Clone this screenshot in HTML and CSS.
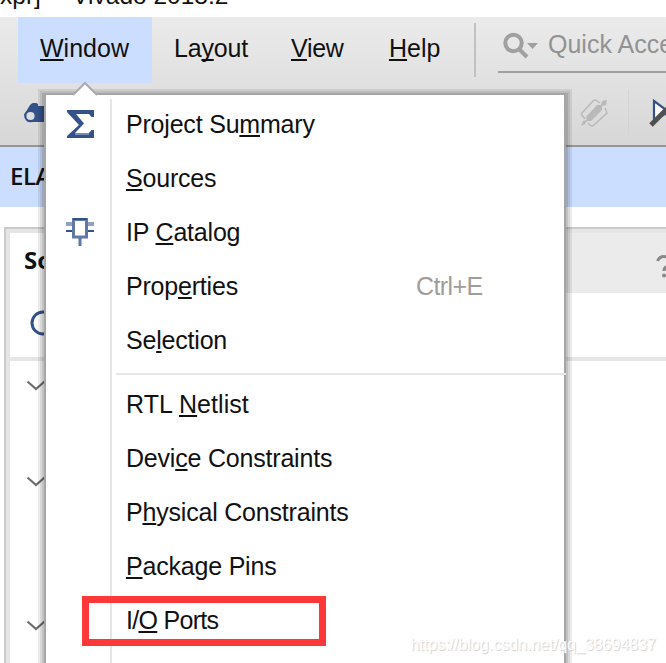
FILE: index.html
```html
<!DOCTYPE html>
<html lang="en">
<head>
<meta charset="utf-8">
<title>Vivado 2018.2</title>
<link rel="stylesheet" href="styles.css">
</head>
<body>
<div class="app">
  <div class="titlebar"><span class="file">xpr]</span><span>-</span><span class="name">Vivado 2018.2</span></div>
  <header class="chrome">
    <nav class="menubar">
      <div class="menu active"><span><u>W</u>indow</span></div>
      <div class="menu layout"><span>La<u>y</u>out</span></div>
      <div class="menu view"><span><u>V</u>iew</span></div>
      <div class="menu help"><span><u>H</u>elp</span></div>
      <div class="divider"></div>
      <div class="search">
        <svg width="36" height="28" viewBox="0 0 36 28"><circle cx="10.500" cy="11" r="8.200" fill="none" stroke="#a0a0a0" stroke-width="4"/><path d="M16 17l8 8" stroke="#a0a0a0" stroke-width="4"/><path d="M24 11h11l-5.500 6z" fill="#a0a0a0"/></svg>
        <span>Quick Acce</span>
      </div>
    </nav>
    <div class="toolbar">
      <svg class="binoculars" width="38" height="24" viewBox="0 0 38 24"><path d="M0 12L6 2Q10-2 14 1V3h7V1q6-3 9 1l7 10-6 7H18L9 19z" fill="#34528a"/><circle cx="6.500" cy="13" r="5.200" fill="#dcdcdc" stroke="#34528a" stroke-width="2.200"/><circle cx="29" cy="13" r="5.200" fill="#dcdcdc" stroke="#34528a" stroke-width="2.200"/></svg>
      <svg class="eraser" width="30" height="30" viewBox="0 0 30 30"><path d="M2 16L14 3q2-2 4 0l3 2M6 21l-4-5M26 10l2 5-13 12q-2 2-4 0l-2-2" fill="none" stroke="#b9b9b9" stroke-width="1.500"/><path d="M2 28l2-5 4-1L7 19 18 7l4 0 1-4 5-1-1 5-4 1v4L12 23H8l-2 3z" fill="#b9b9b9"/></svg>
      <div class="tooldivider"></div>
      <svg class="pointer" width="17" height="30" viewBox="0 0 17 30"><path d="M5 3v19L20 14z" fill="#fff" stroke="#34528a" stroke-width="2.200"/><path d="M2 27L18 11" stroke="#505050" stroke-width="5"/></svg>
    </div>
  </header>
  <div class="flowbar">ELA</div>
  <main class="panel">
    <div class="tabs"><div class="tab">So</div><div class="tabfill"><svg width="16" height="26" viewBox="0 0 16 26"><path d="M1.500 7q2-4.500 6.500-4.500t6 4.500q0 4-4 6-2 1-2 4" fill="none" stroke="#888" stroke-width="3"/><circle cx="8" cy="21.500" r="2" fill="#888"/></svg></div></div>
    <div class="paneltools"><svg width="26" height="26" viewBox="0 0 26 26"><circle cx="13" cy="13" r="11" fill="none" stroke="#34528a" stroke-width="3"/></svg></div>
    <div class="tree">
      <svg class="chev" width="20" height="12" viewBox="0 0 20 12"><path d="M1.500 1.500L10 9l8.500-7.500" fill="none" stroke="#6e6e6e" stroke-width="2.200"/></svg>
      <svg class="chev second" width="20" height="12" viewBox="0 0 20 12"><path d="M1.500 1.500L10 9l8.500-7.500" fill="none" stroke="#6e6e6e" stroke-width="2.200"/></svg>
      <svg class="chev third" width="20" height="12" viewBox="0 0 20 12"><path d="M1.500 1.500L10 9l8.500-7.500" fill="none" stroke="#6e6e6e" stroke-width="2.200"/></svg>
    </div>
  </main>

  <div class="popup">
    <svg class="arrow" width="26" height="16" viewBox="0 0 26 16"><path d="M1 14L13 2l12 12v2H1z" fill="#fff"/><path d="M1 14L13 2l12 12" fill="none" stroke="#aaa" stroke-width="2"/></svg>
    <div class="rail"></div>
    <div class="item"><svg class="icon" width="28" height="28" viewBox="0 0 28 28"><path d="M1 0H28V7H25.500L23 4H10L18 13.500 9 23H23L25.500 20H28V28H1V26L13 15 1 2z" fill="#34528a"/><path d="M9 24h14" stroke="#91a1c0" stroke-width="1.500"/></svg><span>Project Su<u>m</u>mary</span></div>
    <div class="item"><span class="icon"></span><span><u>S</u>ources</span></div>
    <div class="item"><svg class="icon" width="28" height="28" viewBox="0 0 28 28"><path d="M0 6h7M21 6h7" stroke="#91a1c0" stroke-width="4"/><path d="M0 13h7M21 13h7" stroke="#34528a" stroke-width="2"/><path d="M14 20v8" stroke="#5f78a6" stroke-width="3"/><rect x="7.500" y="1.500" width="13" height="17.500" fill="#fff" stroke="#5f78a6" stroke-width="3"/><path d="M7 1h14" stroke="#34528a" stroke-width="2"/></svg><span>IP <u>C</u>atalog</span></div>
    <div class="item"><span class="icon"></span><span>Prop<u>e</u>rties</span><span class="key">Ctrl+E</span></div>
    <div class="item"><span class="icon"></span><span>Se<u>l</u>ection</span></div>
    <div class="separator"></div>
    <div class="item wide"><span class="icon"></span><span>RTL <u>N</u>etlist</span></div>
    <div class="item"><span class="icon"></span><span>Devi<u>c</u>e Constraints</span></div>
    <div class="item"><span class="icon"></span><span>P<u>h</u>ysical Constraints</span></div>
    <div class="item"><span class="icon"></span><span><u>P</u>ackage Pins</span></div>
    <div class="item tight"><span class="icon"></span><span>I/<u>O</u> Ports</span></div>
  </div>
  <div class="highlight"></div>
  <div class="watermark">https://blog.csdn.net/qq_38694837</div>
</div>
</body>
</html>
```
FILE: styles.css
```css
* { box-sizing: border-box; }
body { margin: 0; background: #fff; }
svg { display: block; flex: none; }
u { text-decoration: underline 2px; text-underline-offset: 2px; text-decoration-skip-ink: none; }

.app {
  position: relative;
  width: 666px;
  height: 663px;
  overflow: hidden;
  font: 25px/30px "Liberation Sans", Arial, sans-serif;
  color: #111;
  white-space: nowrap;
}

.titlebar { display: flex; height: 17px; align-items: flex-end; padding-bottom: 6px; line-height: 30px; font-size: 24.500px; overflow: hidden; }
.titlebar .file { width: 53px; }
.titlebar .name { margin-left: 11px; }

.chrome { height: 130px; background: linear-gradient(#ebebeb, #d7d7d7); border-bottom: 2px solid #969696; }
.menubar { display: flex; height: 66px; padding-left: 18px; }
.menubar > * { flex: none; }
.menu { height: 66px; padding-top: 16px; }
.menu.active { width: 134px; padding-left: 22px; background: #cbdeff; }
.menu.layout { width: 139px; padding-left: 22px; letter-spacing: -.2px; }
.menu.view { width: 98px; letter-spacing: -.3px; }
.menu.help { width: 85px; }
.divider { width: 2px; height: 54px; margin-top: 6px; background: #c1c1c1; }
.search { display: flex; width: 180px; height: 56px; margin-left: 22px; padding: 12px 0 0 5px; border-bottom: 2px solid #a0a0a0; color: #929292; }
.search svg { margin: 3px 9px 0 0; }

.toolbar { display: flex; height: 62px; padding: 15px 0 0 24px; }
.toolbar > * { flex: none; }
.binoculars { margin-top: 5px; }
.eraser { margin-left: 517px; }
.tooldivider { width: 1px; height: 45px; margin: -8px 20px 0 19px; background: #d3d3d3; }

.flowbar { height: 60px; padding: 14px 0 0 10px; background: #cbdeff; font: 600 24px/30px "Open Sans", "Noto Sans", sans-serif; letter-spacing: -.5px; }

.panel { height: 450px; margin: 20px 0 0 4px; border: solid #cbcbcb; border-width: 2px 0 0 2px; }
.tabs { display: flex; height: 64px; border-top: 4px solid #e6e6e6; border-left: 4px solid #e6e6e6; }
.tab { width: 120px; padding: 12px 0 0 14px; font: bold 24px/30px "Open Sans", "Noto Sans", sans-serif; }
.tabfill { flex: 1; padding: 21px 0 0 526px; background: #ebebeb; min-width: 0; }
.paneltools { height: 68px; padding: 17px 0 0 20px; border-left: 4px solid #e6e6e6; border-bottom: 4px solid #e6e6e6; }
.tree { height: 320px; padding: 19px 0 0 16px; border-left: 4px solid #e6e6e6; }
.chev.second { margin-top: 84px; }
.chev.third { margin-top: 132px; }

.popup {
  position: absolute;
  left: 44px;
  top: 93px;
  width: 522px;
  height: 600px;
  padding-top: 2px;
  background: #fff;
  border: 2px solid #a5a5a5;
  box-shadow: 0 2px 0 2px rgba(0,0,0,.1), 0 2px 0 4px rgba(0,0,0,.08), 0 2px 0 6px rgba(0,0,0,.08);
}
.arrow { position: absolute; left: 26px; top: -14px; }
.rail { position: absolute; left: 64px; top: 4px; width: 2px; height: 596px; background: #e6e6e6; }
.item { display: flex; align-items: center; height: 54px; padding-left: 20px; letter-spacing: -.2px; }
.item.wide { letter-spacing: .05px; }
.item.tight { letter-spacing: -.7px; }
.item .icon { width: 28px; margin-right: 32px; }
.key { margin-left: 178px; color: #a09d98; letter-spacing: -.6px; }
.separator { height: 2px; margin: 6px -2px 2px 70px; background: #e6e6e6; }

.highlight { position: absolute; left: 82px; top: 596px; width: 244px; height: 50px; border: 7px solid #fc3838; }
.watermark { position: absolute; right: 10px; top: 635px; font-size: 16px; line-height: 20px; color: #fff; text-shadow: 1px 1px 1px #d0d0d0; }
```
